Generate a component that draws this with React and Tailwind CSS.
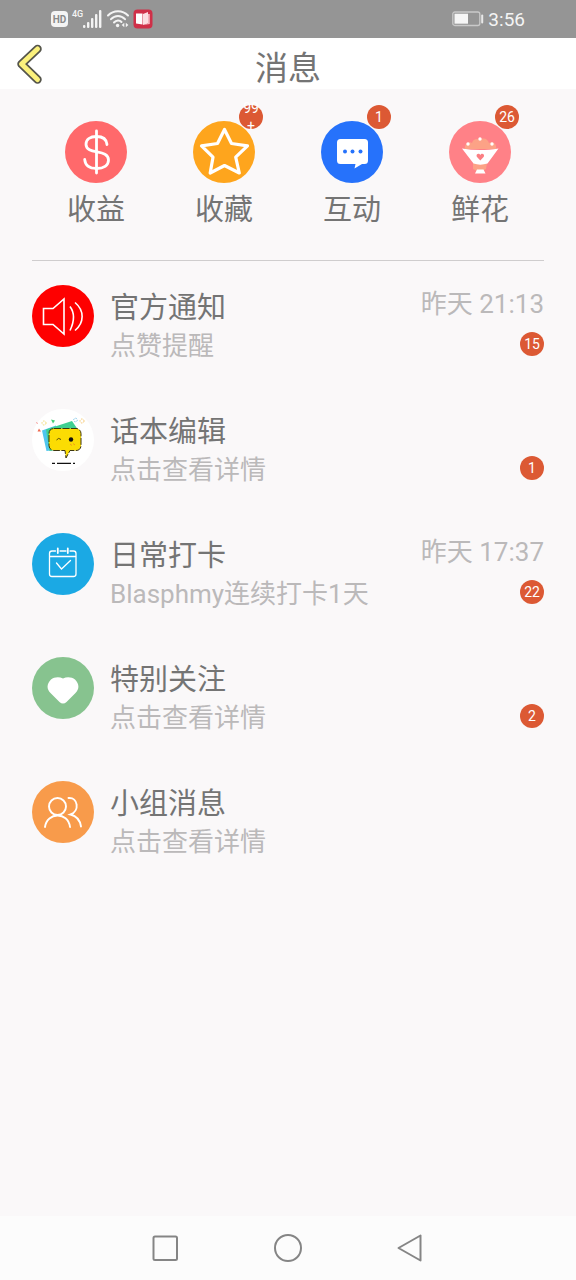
const SignalIcon = () => (
    <svg width="20" height="18" viewBox="0 0 20 18" fill="#f4f4f4" aria-hidden="true">
        <rect x="0" y="15" width="2.4" height="3" rx="1" />
        <rect x="4" y="12" width="2.4" height="6" rx="1" />
        <rect x="8" y="8" width="2.4" height="10" rx="1" />
        <rect x="12" y="4" width="2.4" height="14" rx="1" />
        <rect x="16" y="0" width="2.4" height="18" rx="1" />
    </svg>
);

const WifiIcon = () => (
    <svg width="22" height="18" viewBox="0 0 22 18" fill="none" stroke="#f4f4f4" strokeWidth="2" strokeLinecap="round" aria-hidden="true">
        <path d="M1 5.500C6.500 -.2 15.500 -.2 21 5.500" />
        <path d="M4 9.200C8 4.800 14 4.800 18 9.200" />
        <path d="M7 12.500C9.300 9.800 12.700 9.800 14.500 12" />
        <circle cx="10.600" cy="15.500" r="1.700" fill="#f4f4f4" stroke="none" />
        <path d="M17.300 12.800v4.400l-2.600-2.200zM18.800 12.800v4.400l2.600-2.200z" fill="#f4f4f4" stroke="none" />
    </svg>
);

const BookIcon = () => (
    <svg width="20" height="20" viewBox="0 0 20 20" aria-hidden="true">
        <rect x=".5" y=".5" width="19" height="19" rx="4" fill="#cf3048" />
        <path d="M3 4.500h6.500v11L3 14.500z" fill="#fff" />
        <path d="M10 5l5-2v11.500L10 16z" fill="#fbdfe2" />
        <path d="M15 5h1.800v10L10 16l5-1.500z" fill="#f3b5bd" />
    </svg>
);

const BatteryIcon = () => (
    <svg width="32" height="16" viewBox="0 0 32 16" fill="none" aria-hidden="true">
        <rect x=".8" y="1" width="27" height="13.500" rx="2" stroke="#c9c9c9" strokeWidth="1.300" />
        <rect x="2.500" y="2.700" width="13.500" height="10" fill="#f6f6f6" />
        <rect x="29.200" y="3.500" width="2" height="9" rx="1" fill="#e8e8e8" />
    </svg>
);

const DollarIcon = () => (
    <svg className="size-full" viewBox="0 0 62 62" fill="none" stroke="#fff" strokeWidth="2.800" strokeLinecap="round" aria-hidden="true">
        <path d="M31.500 10v42" />
        <path d="M42 23.500C41.500 18 37.500 15.500 31.500 15.500c-6.500 0-10.500 3-10.500 7.800 0 11 22.500 4.200 22.500 15.700 0 5.500-4.800 8.500-12 8.500-6.800 0-11.300-3.200-11.800-9" />
    </svg>
);

const StarIcon = () => (
    <svg className="size-full" viewBox="0 0 62 62" fill="none" stroke="#fff" strokeWidth="3.200" strokeLinejoin="round" aria-hidden="true">
        <path d="M31.500 8.500l7 14 16 2.300-11.800 11.400 3.600 15.800-14.800-7.500-14.300 7.500 2.800-15.800L8.500 24.800l16-2.300z" />
    </svg>
);

const ChatIcon = () => (
    <svg className="size-full" viewBox="0 0 62 62" aria-hidden="true">
        <path d="M19.500 18h24a3.500 3.500 0 0 1 3.500 3.500v18a3.500 3.500 0 0 1-3.500 3.500H41l-7.500 4.500 1-4.500h-15a3.500 3.500 0 0 1-3.500-3.500v-18a3.500 3.500 0 0 1 3.500-3.500z" fill="#fff" />
        <g fill="#2672fb">
            <circle cx="24" cy="30.500" r="2" />
            <circle cx="31.500" cy="30.500" r="2" />
            <circle cx="39.500" cy="30.500" r="2" />
        </g>
    </svg>
);

const FlowerIcon = () => (
    <svg className="size-full" viewBox="0 0 62 62" aria-hidden="true">
        <path d="M16 28c-1-5 4-8 7-6 1-4 5-5 8-3 3-3 8-1 9 3 4-2 8 1 7 6z" fill="#fca286" />
        <path d="M24 42h14l-1 6-3 2h-6l-4-2z" fill="#fca286" />
        <path d="M13 27.500c12 2 24 2 36.500 0L38.500 42.500c-5 1.500-9.500 1.500-14 0z" fill="#fff" />
        <path d="M28 48.500h6.500l2 4h-10.500z" fill="#fff" />
        <path d="M31.300 39.500l-3.500-3.700c-1.200-2.600 2.200-4.300 3.500-1.700 1.300-2.600 4.700-.9 3.500 1.700z" fill="#fb7f83" />
        <g fill="#fff">
            <circle cx="31" cy="18" r="1.700" />
            <circle cx="19" cy="23" r="1.700" />
            <circle cx="43" cy="23" r="1.700" />
        </g>
    </svg>
);

const SpeakerIcon = () => (
    <svg className="size-full" viewBox="0 0 62 62" fill="none" stroke="#fff" strokeWidth="1.600" aria-hidden="true">
        <path d="M11.500 23.500h9.500l11-9.500v35l-11-9.500h-9.500z" />
        <path d="M38 21.500q7 9.500 0 24" />
        <path d="M43 17.500c9.500 8 9.500 20 0 28" />
    </svg>
);

const EditorIcon = () => (
    <svg className="size-full" viewBox="0 0 62 62" aria-hidden="true">
        <path d="M10 21.500l14-5 2 24-11.500 1.500z" fill="#4fc5ee" />
        <path d="M14 20.500l26-8.500 5.500 8-5 18-23 4z" fill="#3fcf91" />
        <path d="M22 19.500h22a5 5 0 0 1 5 5v12a5 5 0 0 1-5 5h-6l-4 7.500-1-7.500H22a5 5 0 0 1-5-5v-12a5 5 0 0 1 5-5z" fill="#fbdc03" stroke="#3c3510" strokeWidth="1" strokeDasharray="7 1.500" />
        <circle cx="39" cy="30.500" r="2.200" fill="#111" />
        <path d="M24.500 31q2-3 4.500-.5" fill="none" stroke="#57490a" strokeWidth="1" />
        <path d="M38 35l2 1.500M41 34.500l2 1.500" stroke="#f29a1c" strokeWidth="1" />
        <path d="M20 54.300h3M25 54.300h14M41 54.300h2" stroke="#111" strokeWidth="1.200" />
        <path d="M5.500 22.500l1.500-3 2 3z" fill="#ef6a50" />
        <path d="M19 10.500l4 1-2 3z" fill="#42cf76" />
        <g fill="none" strokeWidth="1">
            <circle cx="12" cy="14" r="2" stroke="#f4db6f" strokeDasharray="1.500 1" />
            <circle cx="43.500" cy="11" r="1.800" stroke="#82c8ea" strokeDasharray="1.500 1" />
            <circle cx="50" cy="12" r="2" stroke="#f8c86f" strokeDasharray="1.500 1" />
            <path d="M4 13.500l2 1" stroke="#f5a3a0" />
        </g>
    </svg>
);

const CalendarIcon = () => (
    <svg className="size-full" viewBox="0 0 62 62" fill="none" stroke="#fff" strokeWidth="1.300" strokeLinecap="round" aria-hidden="true">
        <path d="M23.500 18H20a2.500 2.500 0 0 0-2.500 2.500v20.500a2.500 2.500 0 0 0 2.500 2.500h21.500a2.500 2.500 0 0 0 2.500-2.500V20.500a2.500 2.500 0 0 0-2.500-2.500H38M28 18h6M17.500 23.500H44" />
        <path d="M25.800 15.500v4.500M35.800 15.500v4.500" strokeWidth="1.800" />
        <path d="M24.500 30l5 6 9-8.500" />
    </svg>
);

const HeartIcon = () => (
    <svg className="size-full" viewBox="0 0 62 62" fill="#fff" aria-hidden="true">
        <path d="M31 21.500c4-2.200 9-1.500 12 1 4.500 4.500 4.500 9.500 .5 13.500L34.500 45q-3.500 3-7 0L18.500 36c-4-4-4-9 .5-13.500 3-2.500 8-3.200 12-1z" />
    </svg>
);

const GroupIcon = () => (
    <svg className="size-full" viewBox="0 0 62 62" fill="none" stroke="#fff" strokeWidth="1.900" strokeLinecap="round" aria-hidden="true">
        <circle cx="25.500" cy="25.500" r="8.500" />
        <path d="M13 46c2-15 23-15.500 25 0" />
        <path d="M36.500 17c9.500-1 11.500 13 2 16.500 6 1.500 9.500 5.500 10.500 12" />
    </svg>
);

const shortcuts = [
    { label: '收益', color: 'bg-[#ff696b]', Icon: DollarIcon },
    { label: '收藏', color: 'bg-[#fea51d]', Icon: StarIcon, badge: '99 +' },
    { label: '互动', color: 'bg-[#2672fb]', Icon: ChatIcon, badge: '1' },
    { label: '鲜花', color: 'bg-[#ff8187]', Icon: FlowerIcon, badge: '26' },
];

const messages = [
    { title: '官方通知', detail: '点赞提醒', time: '昨天 21:13', count: 15, color: 'bg-[#fe0000]', Icon: SpeakerIcon },
    { title: '话本编辑', detail: '点击查看详情', count: 1, color: 'bg-white', Icon: EditorIcon },
    { title: '日常打卡', detail: 'Blasphmy连续打卡1天', time: '昨天 17:37', count: 22, color: 'bg-[#1ba9e4]', Icon: CalendarIcon },
    { title: '特别关注', detail: '点击查看详情', count: 2, color: 'bg-[#87c38f]', Icon: HeartIcon },
    { title: '小组消息', detail: '点击查看详情', color: 'bg-[#f89b4b]', Icon: GroupIcon },
];

const Badge = ({ children }) => (
    <span className="flex size-6 items-center justify-center rounded-full bg-[#dc5934] text-center text-sm leading-[18px] text-white">
        {children}
    </span>
);

const StatusBar = () => (
    <div className="flex h-[38px] items-center justify-between bg-[#959595] px-[51px] text-[#f4f4f4]">
        <div className="flex items-center gap-1">
            <span className="flex h-4 w-[17px] items-center justify-center rounded-sm bg-[#f4f4f4] text-[10px] font-bold text-[#8a8a8a]">HD</span>
            <div className="flex items-start">
                <span className="w-[11px] text-[9px] leading-[9px] font-medium">4G</span>
                <SignalIcon />
            </div>
            <WifiIcon />
            <BookIcon />
        </div>
        <div className="flex items-center gap-1">
            <BatteryIcon />
            <span className="pt-0.5 text-[19px] leading-6">3:56</span>
        </div>
    </div>
);

const App = () => {
    return (
        <div className="flex min-h-screen flex-col bg-[#faf8f9] font-['Roboto','Noto_Sans_CJK_SC',sans-serif] text-[#747474]">
            <StatusBar />

            <header className="grid h-[51px] grid-cols-[1fr_auto_1fr] items-center bg-white px-4">
                <button type="button" aria-label="返回" className="w-7">
                    <svg width="28" height="42" viewBox="0 0 28 42" fill="none" strokeLinecap="round" strokeLinejoin="round">
                        <path d="M21.500 6L5.500 21l16 15.500" stroke="#55554b" strokeWidth="8.500" />
                        <path d="M21.500 6L5.500 21l16 15.500" stroke="#fbf17c" strokeWidth="5" />
                    </svg>
                </button>
                <h1 className="pt-[10px] text-[33px] leading-10">消息</h1>
            </header>

            <main className="flex-1 px-8">
                <nav className="grid grid-cols-4 border-b border-[#cfcdce] py-8">
                    {shortcuts.map(({ label, color, Icon, badge }) => (
                        <a key={label} href="#" className="flex flex-col items-center gap-[9px]">
                            <span className={`relative size-[62px] rounded-full ${color}`}>
                                <Icon />
                                {badge && (
                                    <span className="absolute -top-4 -right-2">
                                        <Badge>{badge}</Badge>
                                    </span>
                                )}
                            </span>
                            <span className="text-[29px] leading-9">{label}</span>
                        </a>
                    ))}
                </nav>

                <ul className="flex flex-col gap-11 pt-6">
                    {messages.map(({ title, detail, time, count, color, Icon }) => (
                        <li key={title}>
                            <a href="#" className="flex items-start">
                                <span className={`size-[62px] shrink-0 rounded-full ${color}`}>
                                    <Icon />
                                </span>
                                <div className="ml-4 min-w-0 flex-1 pt-1">
                                    <h2 className="text-[29px] leading-[38px]">{title}</h2>
                                    <p className="text-[26px] leading-[38px] text-[#bbb9ba]">{detail}</p>
                                </div>
                                <div className="flex flex-col items-end gap-[9px]">
                                    <time className="h-[38px] text-[26px] leading-[38px] text-[#bbb9ba]">{time}</time>
                                    {count && <Badge>{count}</Badge>}
                                </div>
                            </a>
                        </li>
                    ))}
                </ul>
            </main>

            <footer className="flex h-16 items-center justify-center gap-[94px] bg-[#fcfcfc]">
                <button type="button" aria-label="最近任务">
                    <svg width="28" height="28" viewBox="0 0 28 28" fill="none" stroke="#858585" strokeWidth="2">
                        <rect x="1.500" y="2.500" width="23.500" height="23.500" rx="1.500" />
                    </svg>
                </button>
                <button type="button" aria-label="主屏幕">
                    <svg width="28" height="28" viewBox="0 0 28 28" fill="none" stroke="#858585" strokeWidth="2">
                        <circle cx="14" cy="14" r="13" />
                    </svg>
                </button>
                <button type="button" aria-label="后退">
                    <svg width="28" height="28" viewBox="0 0 28 28" fill="none" stroke="#858585" strokeWidth="2" strokeLinejoin="round">
                        <path d="M24.500 1.500v25L2.500 14z" />
                    </svg>
                </button>
            </footer>
        </div>
    );
};

export default App;
